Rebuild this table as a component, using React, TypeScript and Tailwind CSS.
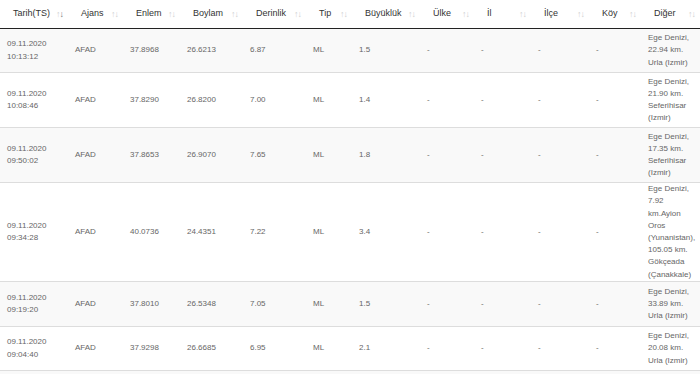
const columns = [
  { label: "Tarih(TS)", w: "w-[68px]", active: true },
  { label: "Ajans", w: "w-[55px]" },
  { label: "Enlem", w: "w-[57px]" },
  { label: "Boylam", w: "w-[63px]" },
  { label: "Derinlik", w: "w-[63px]" },
  { label: "Tip", w: "w-[46px]" },
  { label: "Büyüklük", w: "w-[68px]" },
  { label: "Ülke", w: "w-[54px]" },
  { label: "İl", w: "w-[57px]" },
  { label: "İlçe", w: "w-[58px]" },
  { label: "Köy", w: "w-[52px]" },
  { label: "Diğer", w: "w-[59px]" },
];

interface Quake {
  time: string;
  lat: string;
  lon: string;
  depth: string;
  mag: string;
  other: string;
  h: string;
}

const quakes: Quake[] = [
  { time: "10:13:12", lat: "37.8968", lon: "26.6213", depth: "6.87", mag: "1.5", other: "Ege Denizi, 22.94 km. Urla (Izmir)", h: "h-[44px]" },
  { time: "10:08:46", lat: "37.8290", lon: "26.8200", depth: "7.00", mag: "1.4", other: "Ege Denizi, 21.90 km. Seferihisar (Izmir)", h: "h-[55px]" },
  { time: "09:50:02", lat: "37.8653", lon: "26.9070", depth: "7.65", mag: "1.8", other: "Ege Denizi, 17.35 km. Seferihisar (Izmir)", h: "h-[55px]" },
  { time: "09:34:28", lat: "40.0736", lon: "24.4351", depth: "7.22", mag: "3.4", other: "Ege Denizi, 7.92 km.Ayion Oros (Yunanistan), 105.05 km. Gökçeada (Çanakkale)", h: "h-[99px]" },
  { time: "09:19:20", lat: "37.8010", lon: "26.5348", depth: "7.05", mag: "1.5", other: "Ege Denizi, 33.89 km. Urla (Izmir)", h: "h-[45px]" },
  { time: "09:04:40", lat: "37.9298", lon: "26.6685", depth: "6.95", mag: "2.1", other: "Ege Denizi, 20.08 km. Urla (Izmir)", h: "h-[44px]" },
];

function SortIcon({ active }: { active?: boolean }) {
  return (
    <span className="flex shrink-0 text-[9px] leading-none tracking-[-1px]">
      <span className="text-[#d0d0d0]">↑</span>
      <span className={active ? "text-[#777]" : "text-[#d0d0d0]"}>↓</span>
    </span>
  );
}

export default function App() {
  const cell = "border-b border-[#ddd] pl-[7px] pr-[2px] py-0 align-middle";
  return (
    <div className="w-[700px] h-[374px] overflow-hidden bg-white font-['Liberation_Sans',Arial,sans-serif]">
      <table className="table-fixed border-separate border-spacing-0 w-[700px]">
        <colgroup>
          {columns.map((c) => (
            <col key={c.label} className={c.w} />
          ))}
        </colgroup>
        <thead>
          <tr>
            {columns.map((c) => (
              <th
                key={c.label}
                className="h-[29px] border-b border-[#222] pl-[13px] pr-[5px] py-0 text-left font-normal text-[9px] text-[#333]"
              >
                <div className="flex items-center justify-between">
                  <span>{c.label}</span>
                  <SortIcon active={c.active} />
                </div>
              </th>
            ))}
          </tr>
        </thead>
        <tbody className="text-[8px] leading-[12.2px] text-[#666]">
          {quakes.map((q, i) => (
            <tr key={q.time} className={`${q.h} ${i % 2 === 0 ? "bg-[#f9f9f9]" : "bg-white"}`}>
              <td className={cell}>
                09.11.2020
                <br />
                {q.time}
              </td>
              <td className={cell}>AFAD</td>
              <td className={cell}>{q.lat}</td>
              <td className={cell}>{q.lon}</td>
              <td className={cell}>{q.depth}</td>
              <td className={cell}>ML</td>
              <td className={cell}>{q.mag}</td>
              <td className={cell}>-</td>
              <td className={cell}>-</td>
              <td className={cell}>-</td>
              <td className={cell}>-</td>
              <td className={cell}>{q.other}</td>
            </tr>
          ))}
          {/* next row, starts at the bottom edge */}
          <tr className="h-[40px] bg-[#f9f9f9]">
            <td colSpan={12} />
          </tr>
        </tbody>
      </table>
    </div>
  );
}
